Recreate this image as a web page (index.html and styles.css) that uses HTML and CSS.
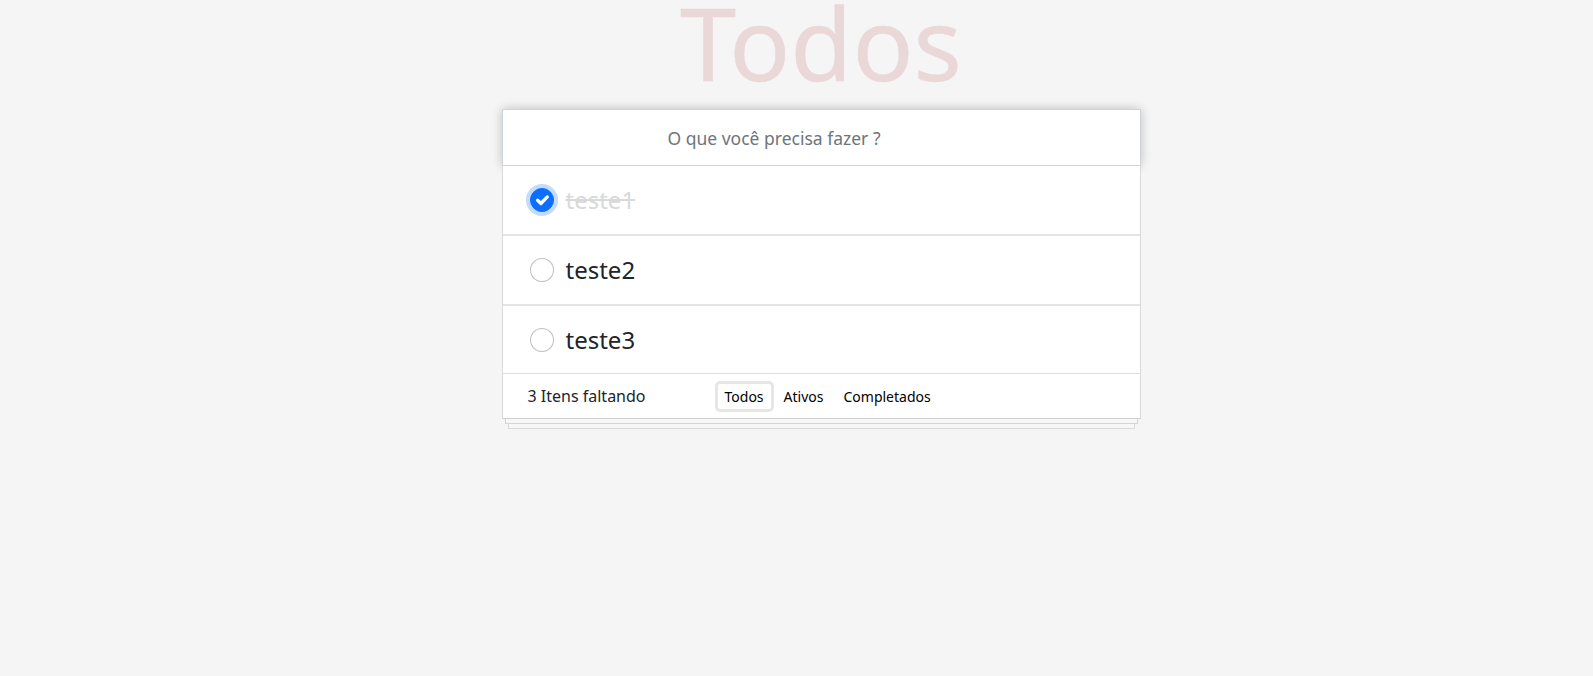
FILE: index.html
```html
<!DOCTYPE html>
<html lang="pt-BR">
<head>
<meta charset="utf-8">
<title>Todos</title>
<link rel="stylesheet" href="styles.css">
</head>
<body>
<div class="page">
  <section class="todoapp">
    <h1 class="title">Todos</h1>
    <input class="new-todo" type="text" placeholder="O que você precisa fazer ?">
    <ul class="todo-list">
      <li class="todo completed">
        <span class="check checked">
          <svg viewBox="0 0 20 20" width="24" height="24"><path d="M6 10.2l3 3l5.8-6" fill="none" stroke="#fff" stroke-width="3" stroke-linecap="round" stroke-linejoin="round"/></svg>
        </span>
        <span class="label">teste1</span>
      </li>
      <li class="todo">
        <span class="check"></span>
        <span class="label">teste2</span>
      </li>
      <li class="todo">
        <span class="check"></span>
        <span class="label">teste3</span>
      </li>
    </ul>
    <footer class="footer">
      <span class="count">3 Itens faltando</span>
      <div class="filters">
        <button class="filter selected">Todos</button>
        <button class="filter">Ativos</button>
        <button class="filter">Completados</button>
      </div>
    </footer>
    <div class="sheet sheet-1"></div>
    <div class="sheet sheet-2"></div>
  </section>
</div>
</body>
</html>
```
FILE: styles.css
```css
* { box-sizing: border-box; }

body {
  margin: 0;
  background: #f5f5f5;
  font-family: "Noto Sans", "Open Sans", sans-serif;
  color: #212529;
}

.page {
  display: flex;
  justify-content: center;
  padding-left: 49px;
}

.todoapp {
  width: 639px;
}

.title {
  margin: 0 0 27px;
  padding-top: 2px;
  font-size: 101px;
  line-height: 80px;
  font-weight: 400;
  text-align: center;
  color: #ead7d7;
  -webkit-text-stroke: 0.4px #ead7d7;
}

.new-todo {
  display: block;
  width: 100%;
  height: 57px;
  margin: 0;
  padding: 0 0 0 165px;
  border: 1px solid #ced4da;
  background: #fff;
  font-family: inherit;
  font-size: 17.5px;
  color: #212529;
  outline: none;
  box-shadow: 0 0 10px rgba(0, 0, 0, 0.22);
}

.new-todo::placeholder {
  color: #6c757d;
}

.todo-list {
  margin: 0;
  padding: 0;
  list-style: none;
  background: #fff;
  border-left: 1px solid #d9d9d9;
  border-right: 1px solid #d9d9d9;
}

.todo {
  display: flex;
  align-items: center;
  height: 70px;
  padding-left: 27px;
  border-bottom: 2px solid #e4e4e4;
}

.todo:last-child {
  height: 67px;
  border-bottom: none;
}

.check {
  flex: none;
  width: 24px;
  height: 24px;
  border: 1px solid rgba(0, 0, 0, 0.25);
  border-radius: 50%;
  background: #fff;
  display: flex;
  align-items: center;
  justify-content: center;
}

.check svg { display: block; }

.check.checked {
  background: #0d6efd;
  border-color: #0d6efd;
  box-shadow: 0 0 0 4px rgba(13, 110, 253, 0.25);
}

.label {
  margin-left: 12px;
  font-size: 24px;
  line-height: 32px;
  color: #212529;
}

.completed .label {
  color: #d9d9d9;
  text-decoration: line-through;
}

.footer {
  display: flex;
  align-items: center;
  height: 46px;
  padding-left: 25px;
  background: #fff;
  border: 1px solid #d9d9d9;
  border-top-color: #e0e0e0;
  border-bottom-color: #cfcfcf;
}

/* stacked paper sheets under the card */
.sheet {
  background: #f7f7f7;
  border: 1px solid #d4d4d4;
  border-top: none;
}

.sheet-1 {
  height: 5px;
  margin: 0 3px;
}

.sheet-2 {
  height: 5px;
  margin: 0 6px;
  border-color: #dadada;
}

.count {
  flex: none;
  width: 187px;
  font-size: 16px;
  line-height: 22px;
}

.filters {
  display: flex;
}

.filter {
  margin: 0;
  padding: 4px 7px;
  border: 3px solid transparent;
  border-radius: 5px;
  background: transparent;
  font-family: inherit;
  font-size: 14px;
  font-weight: 400;
  line-height: 17px;
  color: #000;
  cursor: pointer;
}

.filter.selected {
  border-color: #e6e6e6;
}
```
